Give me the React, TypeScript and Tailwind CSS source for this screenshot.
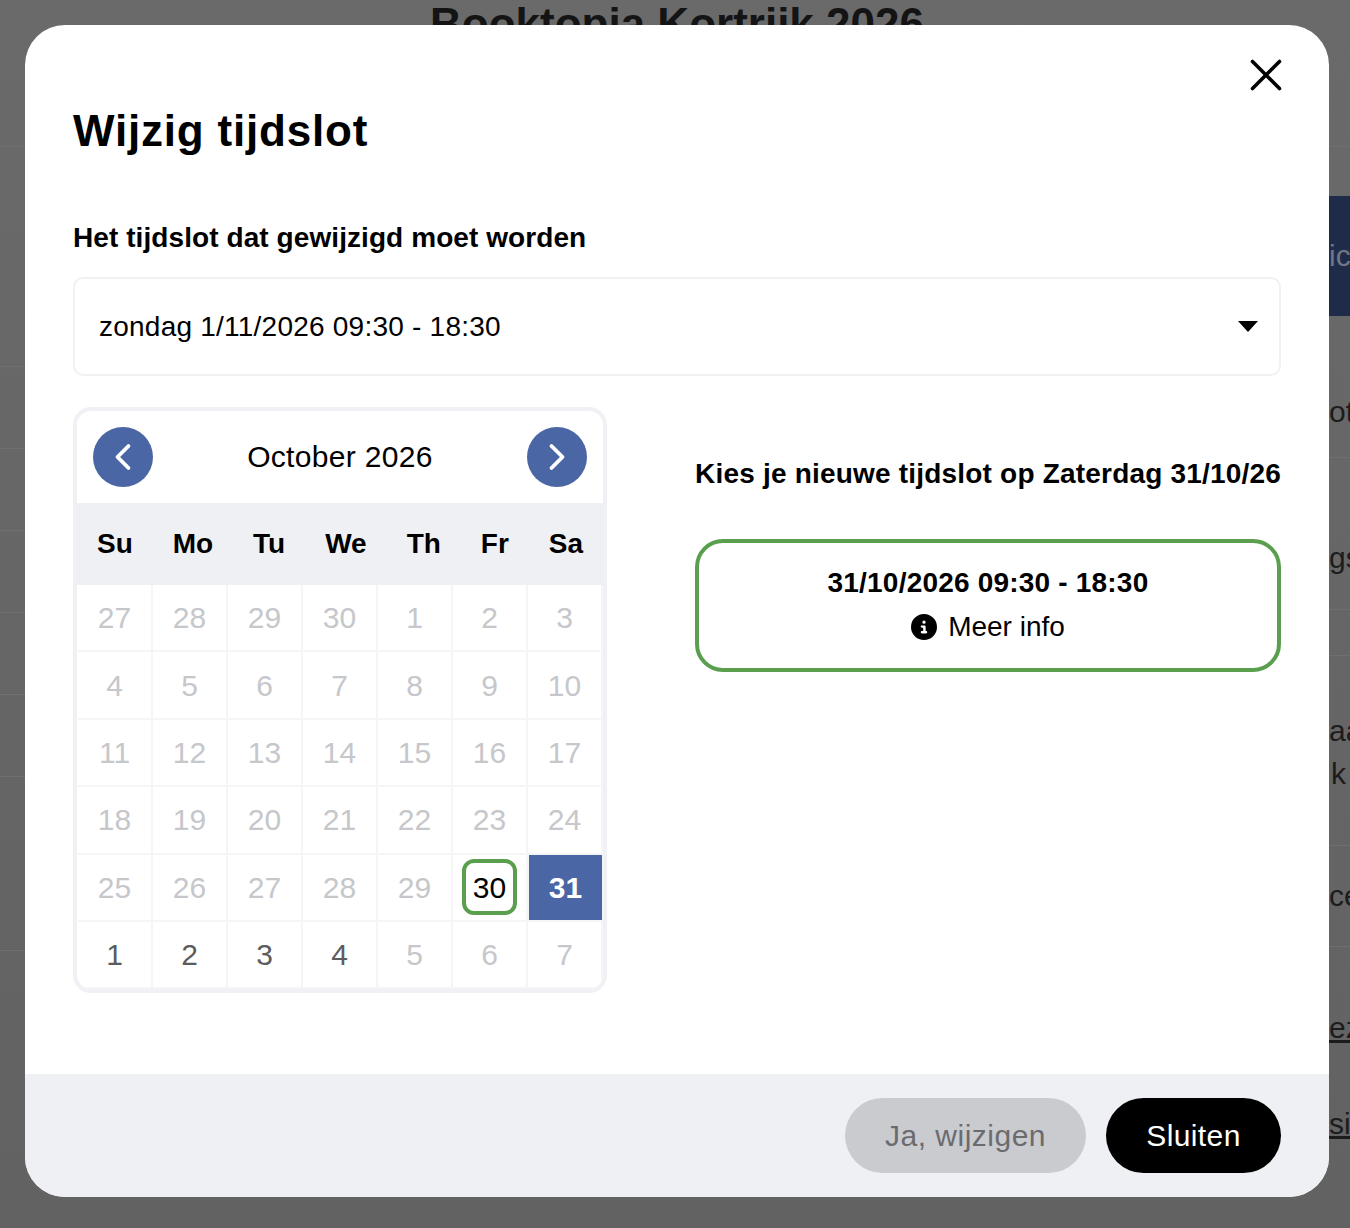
import React from "react";
import { ChevronLeft, ChevronRight, X } from "lucide-react";
import { FaCircleInfo } from "react-icons/fa6";

const weekDays = ["Su", "Mo", "Tu", "We", "Th", "Fr", "Sa"];

const days = [
  27, 28, 29, 30, 1, 2, 3,
  4, 5, 6, 7, 8, 9, 10,
  11, 12, 13, 14, 15, 16, 17,
  18, 19, 20, 21, 22, 23, 24,
  25, 26, 27, 28, 29, 30, 31,
  1, 2, 3, 4, 5, 6, 7,
];

const leftRows = ["h-[147px]", "h-[220px]", "h-[82px]", "h-[82px]", "h-[82px]", "h-[82px]", "h-[82px]", "h-[174px]"];

const DayCell: React.FC<{ day: number; index: number }> = ({ day, index }) => {
  if (index === 34) {
    return (
      <div className="flex items-center justify-center border-x border-b-2 border-[#f5f5f7] bg-[#4a66a5] text-[30px] font-bold text-white">
        {day}
      </div>
    );
  }
  if (index === 33) {
    return (
      <div className="flex items-center justify-center border-r-2 border-b-2 border-[#f5f5f7]">
        <div className="flex h-[56px] w-[55px] items-center justify-center rounded-[12px] border-[4px] border-[#5a9f4e] text-[30px] text-black">
          {day}
        </div>
      </div>
    );
  }
  const dark = index >= 35 && index <= 38;
  return (
    <div
      className={`flex items-center justify-center border-r-2 border-b-2 border-[#f5f5f7] text-[30px] ${
        dark ? "text-[#5c5c5c]" : "text-[#c6c7cb]"
      }`}
    >
      {day}
    </div>
  );
};

export default function App() {
  return (
    <div className="relative h-[1228px] w-[1350px] overflow-hidden bg-linear-to-b from-[#6a6a6a] to-[#626262] font-['Liberation_Sans',Arial,sans-serif]">
      {/* page behind the dialog */}
      <div className="flex h-full">
        <div className="flex w-[25px] flex-col">
          {leftRows.map((h, i) => (
            <div key={i} className={`border-b border-[#6f6f6f] ${h}`} />
          ))}
        </div>
        <div className="flex w-[1304px] justify-center pt-[2px]">
          <h1 className="text-[44px] leading-[44px] font-bold text-[#141414]">Booktopia Kortrijk 2026</h1>
        </div>
        <div className="flex w-[21px] flex-col overflow-hidden text-[30px] leading-[36px] whitespace-nowrap text-[#1c1c1c]">
          <div className="h-[147px] border-b border-[#6f6f6f]" />
          <div className="h-[49px]" />
          <div className="flex h-[120px] items-center bg-[#1f2c49] text-[#6f7787]">ic</div>
          <div className="h-[142px] border-b border-[#6f6f6f] pt-[78px]">ot</div>
          <div className="h-[152px] border-b border-[#6f6f6f] pt-[82px]">gs</div>
          <div className="h-[46px] border-b border-[#6f6f6f]" />
          <div className="h-[190px] border-b border-[#6f6f6f] pt-[53px] leading-[43px]">
            <div>aa</div>
            <div className="pl-[2px]">k</div>
          </div>
          <div className="h-[101px] border-b border-[#6f6f6f] pt-[32px]">ce</div>
          <div className="h-[128px] pt-[63px] underline">ez</div>
          <div className="pt-[31px] underline">si</div>
        </div>
      </div>

      {/* dialog */}
      <div className="absolute top-[25px] left-[25px] flex h-[1172px] w-[1304px] flex-col overflow-hidden rounded-[40px] bg-white">
        <button className="absolute top-[23px] right-[36px] text-black">
          <X className="h-[54px] w-[54px]" strokeWidth={1.6} />
        </button>

        <div className="flex-1 px-12 pt-[80px]">
          <h2 className="text-[44px] leading-[52px] font-bold tracking-[0.8px] text-black">Wijzig tijdslot</h2>

          <p className="mt-[62px] text-[28px] leading-[38px] font-bold tracking-[0.08px] text-black">Het tijdslot dat gewijzigd moet worden</p>

          <div className="mt-[20px] flex h-[99px] items-center justify-between rounded-[10px] border-2 border-[#f1f1f3] pr-[21px] pl-[24px]">
            <span className="text-[28px] tracking-[0.23px] text-black">zondag 1/11/2026 09:30 - 18:30</span>
            <svg width="20" height="11" viewBox="0 0 20 11">
              <polygon points="0,0 20,0 10,11" fill="#000" />
            </svg>
          </div>

          <div className="mt-[31px] flex items-start justify-between">
            <div className="w-[534px] overflow-hidden rounded-[18px] border-[4px] border-[#f0f1f4]">
              <div className="flex h-[92px] items-center justify-between px-[16px]">
                <button className="flex h-[60px] w-[60px] items-center justify-center rounded-full bg-[#4a66a5] text-white">
                  <ChevronLeft className="h-[44px] w-[44px]" strokeWidth={2.1} />
                </button>
                <span className="pb-[2px] text-[30px] tracking-[0.33px] text-black">October 2026</span>
                <button className="flex h-[60px] w-[60px] items-center justify-center rounded-full bg-[#4a66a5] text-white">
                  <ChevronRight className="h-[44px] w-[44px]" strokeWidth={2.1} />
                </button>
              </div>
              <div className="flex h-[82px] items-center justify-around bg-[#eff0f4]">
                {weekDays.map((d) => (
                  <span key={d} className="text-[28px] font-bold text-black">
                    {d}
                  </span>
                ))}
              </div>
              <div className="grid grid-cols-7 auto-rows-[67.4px] pl-[1px]">
                {days.map((day, i) => (
                  <DayCell key={i} day={day} index={i} />
                ))}
              </div>
            </div>

            <div className="w-[586px] pt-[48px]">
              <p className="text-[28px] leading-[38px] font-bold tracking-[0.2px] whitespace-nowrap text-black">Kies je nieuwe tijdslot op Zaterdag 31/10/26</p>
              <div className="mt-[46px] flex h-[133px] flex-col items-center justify-center gap-[6px] rounded-[28px] border-[4px] border-[#5a9f4e] pb-[2px]">
                <span className="text-[28px] leading-[38px] font-bold tracking-[0.2px] text-black">31/10/2026 09:30 - 18:30</span>
                <span className="flex items-center gap-[11px] text-[28px] leading-[38px] text-black">
                  <FaCircleInfo className="h-[26px] w-[26px]" />
                  Meer info
                </span>
              </div>
            </div>
          </div>
        </div>

        <div className="flex h-[123px] items-center justify-end gap-[20px] bg-[#eff0f4] px-12">
          <button className="h-[75px] w-[241px] rounded-full bg-[#cacbcf] text-[30px] tracking-[0.5px] text-[#6a6b6f]">Ja, wijzigen</button>
          <button className="h-[75px] w-[175px] rounded-full bg-black text-[30px] tracking-[0.4px] text-white">Sluiten</button>
        </div>
      </div>
    </div>
  );
}
